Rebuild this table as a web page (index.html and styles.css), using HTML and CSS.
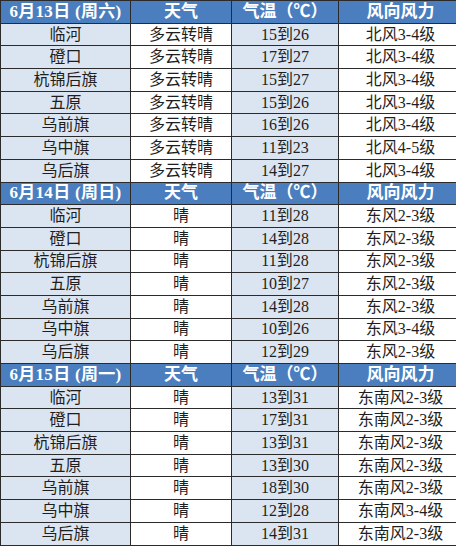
FILE: index.html
```html
<!DOCTYPE html>
<html lang="zh">
<head>
<meta charset="utf-8">
<link rel="stylesheet" href="styles.css">
</head>
<body>
<table class="wx">
<colgroup><col class="c1"><col class="c2"><col class="c3"><col class="c4"></colgroup>
<tbody>
<tr class="hd"><td>6月13日 (周六)</td><td>天气</td><td>气温（℃）</td><td>风向风力</td></tr>
<tr><td>临河</td><td>多云转晴</td><td>15到26</td><td>北风3-4级</td></tr>
<tr><td>磴口</td><td>多云转晴</td><td>17到27</td><td>北风3-4级</td></tr>
<tr><td>杭锦后旗</td><td>多云转晴</td><td>15到27</td><td>北风3-4级</td></tr>
<tr><td>五原</td><td>多云转晴</td><td>15到26</td><td>北风3-4级</td></tr>
<tr><td>乌前旗</td><td>多云转晴</td><td>16到26</td><td>北风3-4级</td></tr>
<tr><td>乌中旗</td><td>多云转晴</td><td>11到23</td><td>北风4-5级</td></tr>
<tr><td>乌后旗</td><td>多云转晴</td><td>14到27</td><td>北风3-4级</td></tr>
<tr class="hd"><td>6月14日 (周日)</td><td>天气</td><td>气温（℃）</td><td>风向风力</td></tr>
<tr><td>临河</td><td>晴</td><td>11到28</td><td>东风2-3级</td></tr>
<tr><td>磴口</td><td>晴</td><td>14到28</td><td>东风2-3级</td></tr>
<tr><td>杭锦后旗</td><td>晴</td><td>11到28</td><td>东风2-3级</td></tr>
<tr><td>五原</td><td>晴</td><td>10到27</td><td>东风2-3级</td></tr>
<tr><td>乌前旗</td><td>晴</td><td>14到28</td><td>东风2-3级</td></tr>
<tr><td>乌中旗</td><td>晴</td><td>10到26</td><td>东风3-4级</td></tr>
<tr><td>乌后旗</td><td>晴</td><td>12到29</td><td>东风2-3级</td></tr>
<tr class="hd"><td>6月15日 (周一)</td><td>天气</td><td>气温（℃）</td><td>风向风力</td></tr>
<tr><td>临河</td><td>晴</td><td>13到31</td><td>东南风2-3级</td></tr>
<tr><td>磴口</td><td>晴</td><td>17到31</td><td>东南风2-3级</td></tr>
<tr><td>杭锦后旗</td><td>晴</td><td>13到31</td><td>东南风2-3级</td></tr>
<tr><td>五原</td><td>晴</td><td>13到30</td><td>东南风2-3级</td></tr>
<tr><td>乌前旗</td><td>晴</td><td>18到30</td><td>东南风2-3级</td></tr>
<tr><td>乌中旗</td><td>晴</td><td>12到28</td><td>东南风3-4级</td></tr>
<tr><td>乌后旗</td><td>晴</td><td>14到31</td><td>东南风2-3级</td></tr>
</tbody>
</table>
</body>
</html>
```

FILE: styles.css
```css
html, body {
  margin: 0;
  padding: 0;
  background: #ffffff;
  overflow: hidden;
}
.wx {
  border-collapse: collapse;
  table-layout: fixed;
  width: 462px;
  font-family: "Liberation Serif", "Noto Sans CJK SC", serif;
  font-size: 16px;
  color: #1e1e1e;
}
.c1 { width: 130px; }
.c2 { width: 101px; }
.c3 { width: 107px; }
.c4 { width: 124px; }
.wx td {
  border: 1px solid #2b2b2b;
  height: 21.7px;
  padding: 0;
  text-align: center;
  vertical-align: middle;
  line-height: 20px;
  white-space: nowrap;
  overflow: hidden;
}
.wx td:nth-child(odd) { background: #dbe5f1; }
.wx td:nth-child(even) { background: #ffffff; }
.wx tr.hd td {
  background: #4a7ebf;
  color: #ffffff;
  font-weight: bold;
  font-size: 17px;
}
.wx tr.hd td:first-child { letter-spacing: 0.3px; }
```
